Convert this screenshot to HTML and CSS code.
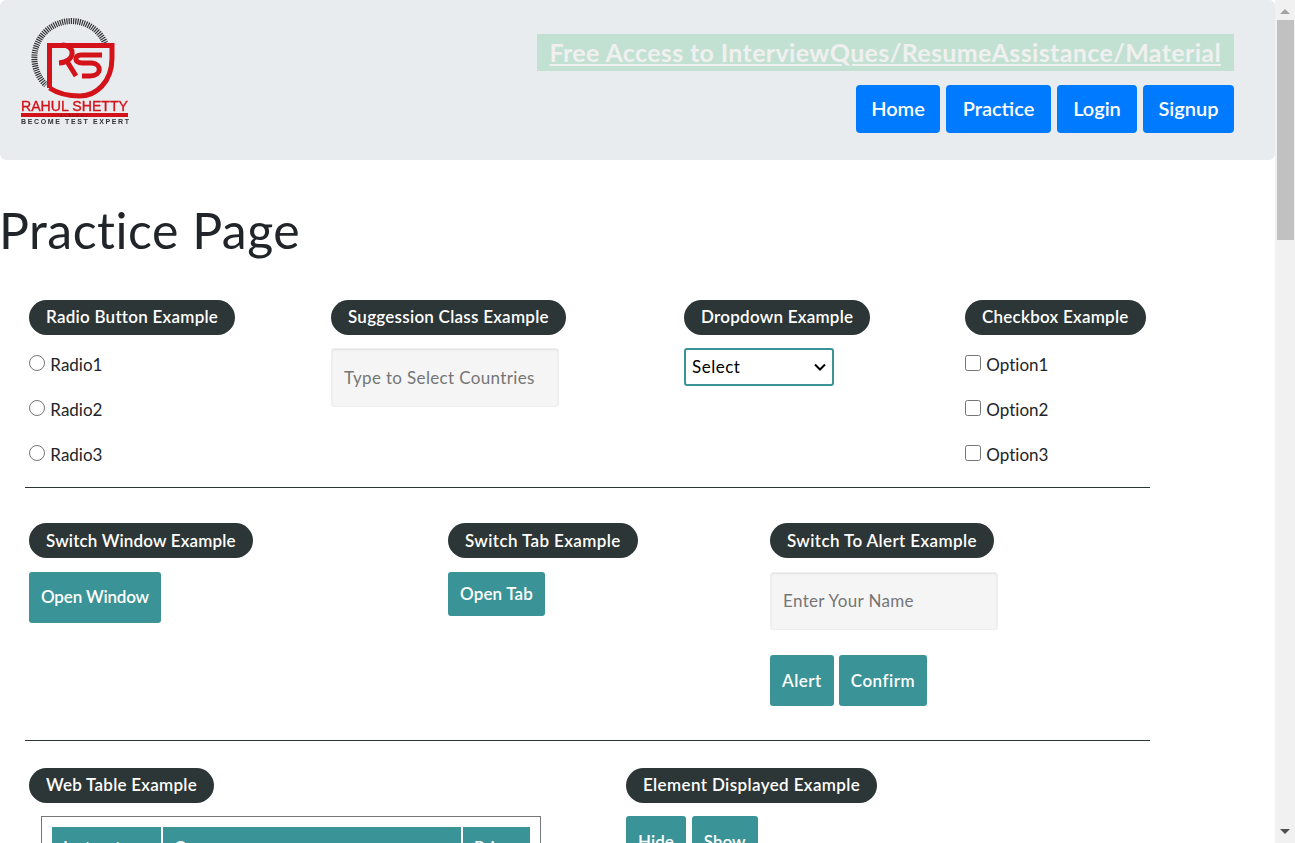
FILE: index.html
```html
<!DOCTYPE html>
<html lang="en">
<head>
    <meta charset="UTF-8">
    <meta name="viewport" content="width=device-width, initial-scale=1.0">
    <title>Practice Page</title>
    <link rel="stylesheet" href="styles.css">
</head>
<body>
<div class="page">
    <header class="jumbotron">
        <svg class="logo" width="140" height="130" viewBox="0 0 140 130">
            <path class="logo-ring" d="M106 45 A37 37 0 1 0 46 85"/>
            <path class="logo-shield" d="M49.5 88 V45.5 H112 V58 C112 82 96 96 80 96 C68 96 57 93 49.5 88"/>
            <path class="logo-mark" d="M62 45 C76 45 76 62 59 63 M68 63 L76 76"/>
            <path class="logo-mark" d="M102 55 H81 C74 55 74 63 82 63 H92 C102 64 102 76 90 76 H82"/>
            <text class="logo-name" x="21" y="111" textLength="107" lengthAdjust="spacingAndGlyphs">RAHUL SHETTY</text>
            <rect class="logo-bar" x="21" y="113" width="107" height="4"/>
            <text class="logo-academy" x="60" y="117" textLength="28">ACADEMY</text>
            <text class="logo-tag" x="21" y="123.5" textLength="108">BECOME TEST EXPERT</text>
        </svg>
        <div class="header-right">
            <a class="free-link" href="#">Free Access to InterviewQues/ResumeAssistance/Material</a>
            <nav class="nav-buttons">
                <button class="nav-btn nav-home">Home</button>
                <button class="nav-btn nav-practice">Practice</button>
                <button class="nav-btn nav-login">Login</button>
                <button class="nav-btn nav-signup">Signup</button>
            </nav>
        </div>
    </header>

    <h1>Practice Page</h1>

    <section class="row row-one">
        <div class="col col-radio">
            <span class="legend">Radio Button Example</span>
            <label class="check-row"><input type="radio" name="radio"> Radio1</label>
            <label class="check-row"><input type="radio" name="radio"> Radio2</label>
            <label class="check-row"><input type="radio" name="radio"> Radio3</label>
        </div>
        <div class="col col-suggest">
            <span class="legend">Suggession Class Example</span>
            <input class="text-input" type="text" placeholder="Type to Select Countries">
        </div>
        <div class="col col-dropdown">
            <span class="legend">Dropdown Example</span>
            <select class="dropdown">
                <option>Select</option>
                <option>Option1</option>
                <option>Option2</option>
                <option>Option3</option>
            </select>
        </div>
        <div class="col">
            <span class="legend">Checkbox Example</span>
            <label class="check-row"><input type="checkbox"> Option1</label>
            <label class="check-row"><input type="checkbox"> Option2</label>
            <label class="check-row"><input type="checkbox"> Option3</label>
        </div>
    </section>
    <hr class="divider">

    <section class="row row-two">
        <div class="col col-window">
            <span class="legend legend-tight">Switch Window Example</span>
            <button class="btn btn-tall btn-open-window">Open Window</button>
        </div>
        <div class="col col-tab">
            <span class="legend legend-wide">Switch Tab Example</span>
            <button class="btn btn-tab">Open Tab</button>
        </div>
        <div class="col">
            <span class="legend legend-wide">Switch To Alert Example</span>
            <input class="text-input" type="text" placeholder="Enter Your Name">
            <div class="alert-buttons">
                <button class="btn btn-tall btn-spaced">Alert</button>
                <button class="btn btn-tall btn-spaced">Confirm</button>
            </div>
        </div>
    </section>
    <hr class="divider">

    <section class="row row-three">
        <div class="col col-table">
            <span class="legend">Web Table Example</span>
            <div class="table-box">
                <table class="courses">
                    <tr>
                        <th class="th-instructor">Instructor</th>
                        <th class="th-course">Course</th>
                        <th class="th-price">Price</th>
                    </tr>
                </table>
            </div>
        </div>
        <div class="col">
            <span class="legend legend-wide">Element Displayed Example</span>
            <div class="show-buttons">
                <button class="btn btn-tall">Hide</button>
                <button class="btn btn-tall">Show</button>
            </div>
        </div>
    </section>
</div>
<div class="scrollbar">
    <span class="arrow-up"></span>
    <span class="thumb"></span>
    <span class="arrow-down"></span>
</div>
</body>
</html>
```

FILE: styles.css
```css
html, body {
    height: 100%;
    overflow: hidden;
}
body {
    font-family: Lato, "Open Sans", sans-serif;
    font-variant-ligatures: none;
    margin: 0;
    display: flex;
    color: #212529;
    background-color: white;
    font-size: 17px;
}
.page {
    width: 1275px;
    height: 843px;
    overflow: hidden;
    flex: none;
}

/* header */
.jumbotron {
    height: 160px;
    box-sizing: border-box;
    background-color: #e9ecef;
    border-radius: 6px;
    display: flex;
    justify-content: space-between;
    padding: 0 41px 0 0;
}
.logo {
    filter: blur(0.3px);
}
.logo-ring {
    fill: none;
    stroke: #333;
    stroke-width: 6;
    stroke-dasharray: 1.2 1;
}
.logo-shield {
    fill: none;
    stroke: #d3121a;
    stroke-width: 5;
}
.logo-mark {
    fill: none;
    stroke: #d3121a;
    stroke-width: 5;
}
.logo-name {
    font-family: "Liberation Sans", sans-serif;
    font-size: 14px;
    fill: #d3121a;
    stroke: #d3121a;
    stroke-width: 0.35;
}
.logo-bar {
    fill: #d3121a;
}
.logo-academy {
    font-family: "Liberation Sans", sans-serif;
    font-size: 4px;
    fill: #7a1015;
}
.logo-tag {
    font-family: "Liberation Sans", sans-serif;
    font-size: 7px;
    font-weight: bold;
    fill: #333;
}
.header-right {
    display: flex;
    flex-direction: column;
    align-items: flex-end;
    padding-top: 34px;
}
.free-link {
    display: block;
    height: 37px;
    line-height: 36px;
    padding: 0 13px;
    background-color: #c3e1d3;
    color: #f0f0f0;
    font-size: 25px;
    font-weight: bold;
    letter-spacing: 0.36px;
    text-decoration: underline;
}
.nav-buttons {
    display: flex;
    gap: 6px;
    margin-top: 14px;
}
.nav-btn {
    height: 48px;
    padding: 0 0 2px;
    border: none;
    border-radius: 4px;
    background-color: #007bff;
    color: white;
    font-family: inherit;
    font-size: 20px;
    font-weight: 600;
}
.nav-home {
    width: 84px;
}
.nav-practice {
    width: 105px;
}
.nav-login {
    width: 80px;
}
.nav-signup {
    width: 91px;
}

h1 {
    margin: 41px 0 41px;
    font-size: 50px;
    font-weight: normal;
    letter-spacing: 0.5px;
    line-height: 58px;
    text-indent: -1px;
}

/* rows */
.row {
    display: flex;
    padding-left: 29px;
}
.row-one {
    height: 187px;
}
.row-two {
    margin-top: 35px;
    height: 217px;
}
.row-three {
    margin-top: 27px;
}
.col {
    display: flex;
    flex-direction: column;
    align-items: flex-start;
}
.col-radio {
    width: 302px;
}
.col-suggest {
    width: 353px;
}
.col-dropdown {
    width: 281px;
}
.col-window {
    width: 419px;
}
.col-tab {
    width: 322px;
}
.col-table {
    width: 597px;
}
.divider {
    width: 1125px;
    margin: 0 0 0 25px;
    border: none;
    border-top: 1px solid #2d3636;
}
.legend {
    display: block;
    height: 35px;
    line-height: 34px;
    padding: 0 17px;
    border-radius: 18px;
    background-color: #2d3636;
    color: white;
    font-weight: 600;
    letter-spacing: 0.25px;
    margin-bottom: 13px;
}
.legend-wide {
    letter-spacing: 0.38px;
}
.legend-tight {
    letter-spacing: 0.15px;
}
.row-two .legend {
    line-height: 36px;
    margin-bottom: 14px;
}
.check-row {
    display: flex;
    align-items: center;
    gap: 1px;
    height: 45px;
    margin-top: -6px;
    margin-bottom: 6px;
    white-space: pre;
}
.check-row input {
    width: 16px;
    height: 16px;
    margin: 0 0 4px;
}
.text-input {
    box-sizing: border-box;
    width: 228px;
    height: 59px;
    padding: 0 12px;
    background-color: #f5f5f5;
    border: 1px solid #eeeeee;
    border-radius: 3px;
    box-shadow: inset 0 1px 2px rgba(0, 0, 0, 0.08);
    font-family: inherit;
    font-size: 17px;
    letter-spacing: 0.35px;
}
.row-two .text-input {
    height: 58px;
    padding-bottom: 2px;
}
.dropdown {
    appearance: none;
    width: 150px;
    height: 38px;
    padding: 0 0 2px 6px;
    border: 2px solid #3a9396;
    border-radius: 3px;
    background: white url("data:image/svg+xml,%3Csvg xmlns='http://www.w3.org/2000/svg' width='12' height='8'%3E%3Cpath d='M1 1.5l5 5 5-5' fill='none' stroke='%23000' stroke-width='2'/%3E%3C/svg%3E") no-repeat right 6px center;
    font-family: inherit;
    font-size: 17px;
    letter-spacing: 0.5px;
    color: black;
}
.btn {
    border: none;
    border-radius: 3px;
    background-color: #3a9396;
    color: white;
    font-family: inherit;
    font-size: 17px;
    font-weight: 600;
    padding: 0 12px;
}
.btn-tall {
    height: 51px;
}
.btn-tab {
    height: 44px;
    padding-bottom: 2px;
    letter-spacing: 0.15px;
}
.btn-open-window {
    padding-bottom: 2px;
    letter-spacing: -0.17px;
}
.btn-spaced {
    letter-spacing: 0.5px;
}
.alert-buttons {
    display: flex;
    gap: 5px;
    margin-top: 25px;
}
.show-buttons {
    display: flex;
    gap: 6px;
}
.table-box {
    box-sizing: border-box;
    width: 500px;
    height: 80px;
    margin-left: 12px;
    border: 1px solid #777;
    padding: 10px;
}
.courses {
    border-collapse: separate;
    border-spacing: 0;
    table-layout: fixed;
    width: 478px;
}
.courses th {
    box-sizing: border-box;
    background-color: #3a9396;
    color: white;
    text-align: left;
    height: 40px;
    padding: 0 0 0 11px;
    font-size: 17px;
    font-weight: 600;
}
.th-instructor, .th-course {
    border-right: 2px solid white;
}
.th-instructor {
    width: 111px;
}
.th-course {
    width: 300px;
}

/* scrollbar on the right edge */
.scrollbar {
    width: 20px;
    height: 843px;
    flex: none;
    background-color: #f1f1f1;
    display: flex;
    flex-direction: column;
    align-items: center;
}
.arrow-up, .arrow-down {
    width: 0;
    height: 0;
    border-left: 5px solid transparent;
    border-right: 5px solid transparent;
}
.arrow-up {
    margin-top: 9px;
    border-bottom: 5px solid #a3a3a3;
}
.thumb {
    width: 17px;
    height: 220px;
    margin-top: 6px;
    background-color: #c1c1c1;
}
.arrow-down {
    margin-top: auto;
    margin-bottom: 9px;
    border-top: 5px solid #505050;
}
```
